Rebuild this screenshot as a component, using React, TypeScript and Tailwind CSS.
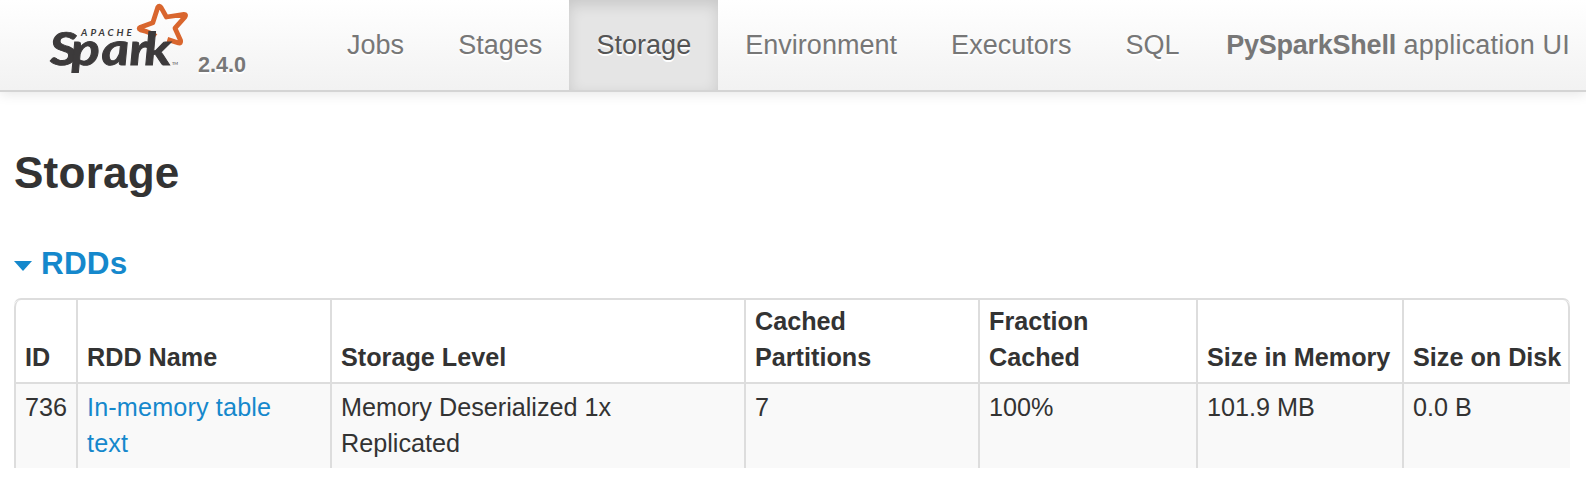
import React from "react";

const tabs = ["Jobs", "Stages", "Storage", "Environment", "Executors", "SQL"];

function SparkLogo() {
  return (
    <svg width="140" height="80" viewBox="50 0 140 80" className="block shrink-0 overflow-visible" role="img" aria-label="Apache Spark">
      <path
        d="M155.8 36.2 C152 33 146 31.2 140.5 29.8 Q137.8 28.6 140.5 27.2 L152.8 22.8 L157.8 7.2 Q159.3 4.8 161 7.4 L166.4 17 L184 14.4 Q186.6 14.4 185 16.8 L175 28.2 L180.6 40.6 Q181.2 43.4 178.6 43 L167.4 39.4"
        fill="none"
        stroke="#d9662e"
        strokeWidth="4.8"
        strokeLinejoin="round"
      />
      <g fill="#3c3a3b" fontFamily="Lato, sans-serif" fontStyle="italic">
        <text x="81 90.5 98.5 107.5 116.5 126.5" y="35.5" fontSize="9.8" fontWeight="700">
          APACHE
        </text>
        <text
          transform="translate(50.5 65) skewX(3) scale(1.2 1)"
          y="0"
          x="0 17.5 43 66 78.5"
          fontSize="45"
          fontWeight="700"
          stroke="#3c3a3b"
          strokeWidth="0.9"
        >
          Spark
        </text>
        <text x="172" y="64.5" fontSize="4" fontStyle="normal">
          TM
        </text>
      </g>
    </svg>
  );
}

function Navbar() {
  return (
    <header className="flex h-[92px] border-b-2 border-[#d4d4d4] bg-linear-to-b from-white to-[#f2f2f2] pl-[50px] text-[27px] leading-9 text-[#777] shadow-[0_2px_12px_rgba(0,0,0,0.1)]">
      <a className="flex h-[90px] w-[270px] shrink-0 items-start">
        <SparkLogo />
        <span className="mt-[47px] ml-[8px] text-[21.6px] font-bold [text-shadow:0_2px_0_#fff]">2.4.0</span>
      </a>
      <nav className="flex tracking-[0.03px]">
        {tabs.map((tab) => (
          <a
            key={tab}
            className={
              tab === "Storage"
                ? "h-[90px] bg-[#e5e5e5] px-[27px] pt-[27px] text-[#555] shadow-[inset_0_5px_14px_rgba(0,0,0,0.125)] [text-shadow:0_2px_0_#fff]"
                : "h-[90px] px-[27px] pt-[27px] [text-shadow:0_2px_0_#fff]"
            }
          >
            {tab}
          </a>
        ))}
      </nav>
      <p className="mr-[16px] ml-auto pt-[27px] whitespace-nowrap">
        <strong className="tracking-[-0.25px]">PySparkShell</strong>
        <span className="tracking-[0.2px]"> application UI</span>
      </p>
    </header>
  );
}

const columns = [
  { title: "ID", value: "736", width: "w-[62px]" },
  { title: "RDD Name", value: "In-memory table text", width: "w-[254px]" },
  { title: "Storage Level", value: "Memory Deserialized 1x Replicated", width: "w-[414px]" },
  { title: "Cached Partitions", value: "7", width: "w-[234px]" },
  { title: "Fraction Cached", value: "100%", width: "w-[218px]" },
  { title: "Size in Memory", value: "101.9 MB", width: "w-[206px]" },
  { title: "Size on Disk", value: "0.0 B", width: "w-[168px]" },
];

function RddTable() {
  return (
    <table className="w-[1556px] table-fixed border-separate border-spacing-0 rounded-t-[7px] border-t-2 border-[#ddd] text-[25.2px] leading-9">
      <thead>
        <tr>
          {columns.map((c) => (
            <th
              key={c.title}
              className={`${c.width} h-[82px] border-l-2 border-[#ddd] pt-[3px] pr-0 pb-[7px] pl-[9px] text-left align-bottom font-bold first:rounded-tl-[7px] last:rounded-tr-[7px] last:border-r-2`}
            >
              <span className={c.title === "Cached Partitions" || c.title === "Fraction Cached" ? "block w-[130px]" : "block whitespace-nowrap"}>
                {c.title}
              </span>
            </th>
          ))}
        </tr>
      </thead>
      <tbody>
        <tr>
          {columns.map((c) => (
            <td
              key={c.title}
              className="h-[86px] border-t-2 border-l-2 border-[#ddd] bg-[#f9f9f9] pt-[5px] pr-0 pb-[7px] pl-[9px] align-top"
            >
              {c.title === "RDD Name" ? (
                <a className="block w-[200px] tracking-[0.15px] text-[#1588cc]">{c.value}</a>
              ) : (
                <span className={c.title === "Storage Level" ? "block w-[300px]" : "block"}>{c.value}</span>
              )}
            </td>
          ))}
        </tr>
      </tbody>
    </table>
  );
}

export default function App() {
  return (
    <div className="h-[488px] overflow-hidden bg-white font-['Liberation_Sans',Arial,sans-serif] text-[#333]">
      <Navbar />
      <main className="pl-[14px]">
        <h3 className="pt-[45px] text-[44.1px] leading-[72px] font-bold tracking-[0.2px]">Storage</h3>
        <h4 className="mt-[36px] flex h-[36px] items-center text-[31.5px] leading-9 font-bold tracking-[0.15px] text-[#1588cc]">
          <svg width="18" height="10" viewBox="0 0 18 10" className="mt-[5px] mr-[9px]">
            <path d="M0 0H18L9 10Z" fill="#1588cc" />
          </svg>
          RDDs
        </h4>
        <div className="mt-[17px]">
          <RddTable />
        </div>
      </main>
    </div>
  );
}
